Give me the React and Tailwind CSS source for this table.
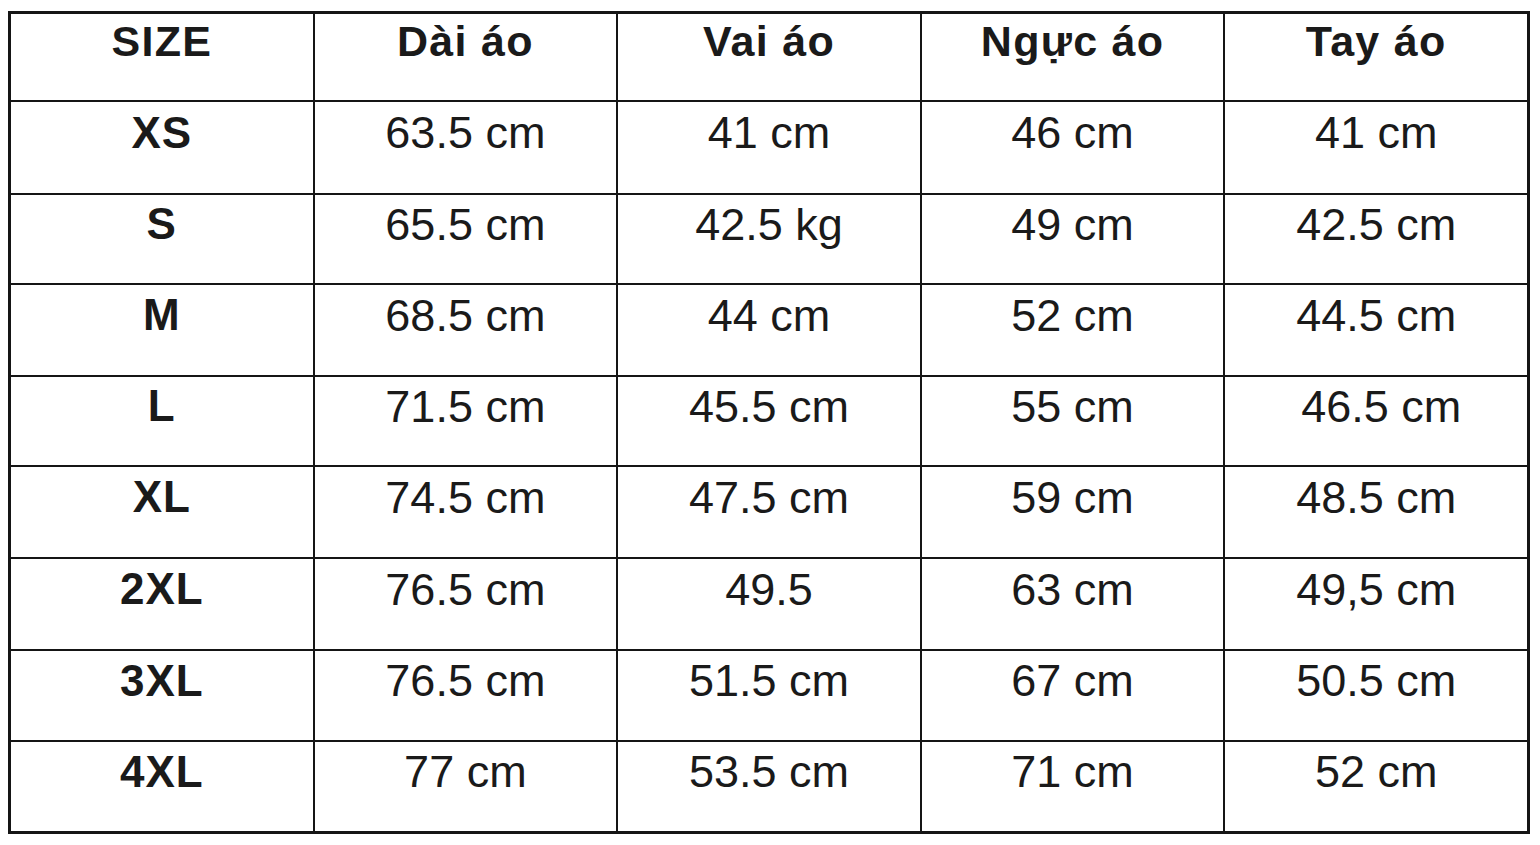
import React from 'react';

const headers = ['SIZE', 'Dài áo', 'Vai áo', 'Ngực áo', 'Tay áo'];

const rows = [
  { size: 'XS', values: ['63.5 cm', '41 cm', '46 cm', '41 cm'], h: 'h-[91px]' },
  { size: 'S', values: ['65.5 cm', '42.5 kg', '49 cm', '42.5 cm'], h: 'h-[88px]' },
  { size: 'M', values: ['68.5 cm', '44 cm', '52 cm', '44.5 cm'], h: 'h-[90px]' },
  { size: 'L', values: ['71.5 cm', '45.5 cm', '55 cm', '46.5 cm'], h: 'h-[88px]', shiftLast: true },
  { size: 'XL', values: ['74.5 cm', '47.5 cm', '59 cm', '48.5 cm'], h: 'h-[90px]' },
  { size: '2XL', values: ['76.5 cm', '49.5', '63 cm', '49,5 cm'], h: 'h-[90px]' },
  { size: '3XL', values: ['76.5 cm', '51.5 cm', '67 cm', '50.5 cm'], h: 'h-[89px]' },
  { size: '4XL', values: ['77 cm', '53.5 cm', '71 cm', '52 cm'], h: 'h-[89px]' },
];

export default function App() {
  return (
    <div
      className="w-[1540px] h-[845px] bg-white pl-[8px] pt-[11px] text-[#1a1a1a]"
      style={{ fontFamily: '"Liberation Sans", Arial, sans-serif' }}
    >
      <div className="w-[1522px] bg-[#151515] p-[3px] grid grid-cols-5 gap-[2px]">
        {/* header */}
        {headers.map((h) => (
          <div
            key={h}
            className="h-[86px] bg-white flex items-center justify-center pb-[32px] text-[43px] font-bold leading-none tracking-[1.3px]"
          >
            {h}
          </div>
        ))}

        {/* body rows */}
        {rows.map((row) => (
          <React.Fragment key={row.size}>
            <div
              className={`${row.h} bg-white flex items-center justify-center pb-[30px] text-[44px] font-bold leading-none tracking-[1px]`}
            >
              {row.size}
            </div>
            {row.values.map((v, i) => (
              <div
                key={i}
                className={`${row.h} bg-white flex items-center justify-center pb-[30px] text-[45px] leading-none ${
                  row.shiftLast && i === 3 ? 'pl-[10px]' : ''
                }`}
              >
                {v}
              </div>
            ))}
          </React.Fragment>
        ))}
      </div>
    </div>
  );
}
